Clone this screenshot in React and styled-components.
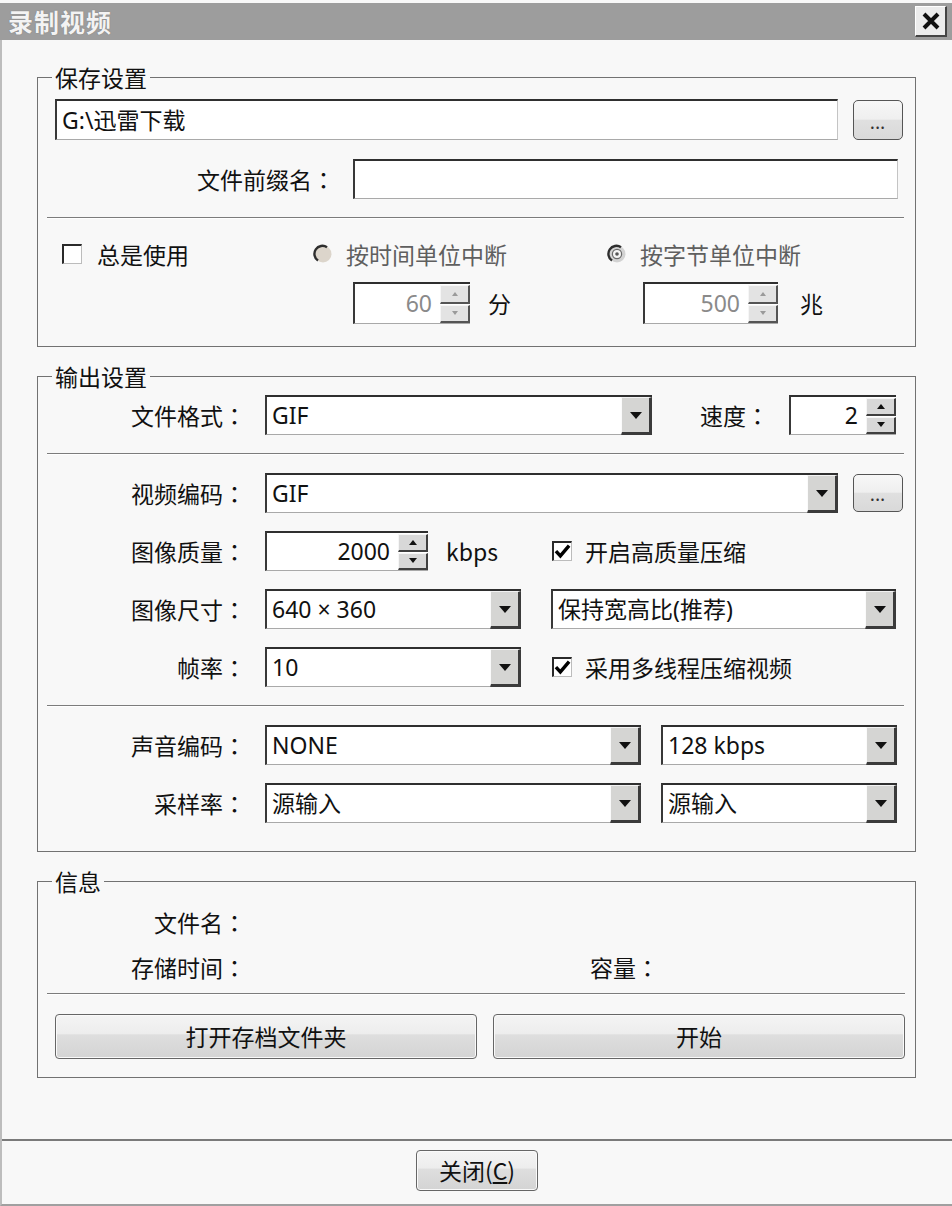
import React from 'react';
import styled, { createGlobalStyle } from 'styled-components';

const FONT = `"Noto Sans CJK SC", "Noto Sans", sans-serif`;
const FIELD_FONT = `"Noto Sans", "Noto Sans CJK SC", sans-serif`;

const GlobalStyle = createGlobalStyle`
  * { box-sizing: border-box; }
  html, body { margin: 0; padding: 0; background: #fff; }
  body { font-family: ${FONT}; color: #111; }
`;

const Window = styled.div`
  width: 952px;
  height: 1206px;
  display: flex;
  flex-direction: column;
  background: #f8f8f8;
  overflow: hidden;
`;

const TitleBar = styled.div`
  margin-top: 3px;
  height: 37px;
  flex: none;
  display: flex;
  align-items: center;
  justify-content: space-between;
  padding: 0 5px 0 8px;
  background: #9d9d9d;
`;

const Title = styled.div`
  font-size: 25px;
  font-weight: 700;
  line-height: 1;
  letter-spacing: 1px;
  color: #f3f3f3;
  text-shadow: 0 0 1px #6a6a6a;
`;

const CloseBox = styled.div`
  width: 32px;
  height: 31px;
  display: flex;
  align-items: center;
  justify-content: center;
  background: #ececec;
  border-top: 1px solid #fff;
  border-left: 1px solid #fff;
  border-right: 2px solid #444;
  border-bottom: 2px solid #444;
`;

const Body = styled.div`
  flex: 1;
  display: flex;
  flex-direction: column;
  border-left: 2px solid #bdbdbd;
  border-bottom: 2px solid #a0a0a0;
`;

const Main = styled.div`
  flex: 1;
  display: flex;
  flex-direction: column;
  gap: 16px;
  padding: 24px 36px 0 35px;
`;

const Footer = styled.div`
  flex: none;
  height: 65px;
  display: flex;
  justify-content: center;
  padding-top: 9px;
  border-top: 2px solid #7a7a7a;
`;

const Group = styled.fieldset`
  margin: 0;
  min-width: 0;
  border: 1px solid #727272;
  padding: ${(p) => p.$pad};
  display: flex;
  flex-direction: column;
  gap: ${(p) => p.$gap || 0}px;
`;

const Legend = styled.legend`
  padding: 0 3px;
  margin-left: -3px;
  font-size: 23px;
  line-height: 26px;
  color: #111;
`;

const Row = styled.div`
  flex: none;
  display: flex;
  align-items: center;
  height: ${(p) => p.$h || 40}px;
  margin-top: ${(p) => p.$mt || 0}px;
`;

const Separator = styled.div`
  flex: none;
  height: 2px;
  margin: ${(p) => p.$mt || 0}px 0 0 -8px;
  border-top: 1px solid #7c7c7c;
  border-bottom: 1px solid #fff;
`;

const Text = styled.span`
  flex: none;
  font-size: 23px;
  line-height: 1;
  white-space: nowrap;
  color: ${(p) => (p.$muted ? '#5f5f5f' : '#111')};
  margin-left: ${(p) => p.$ml || 0}px;
  width: ${(p) => (p.$w ? `${p.$w}px` : 'auto')};
  text-align: ${(p) => p.$align || 'left'};
`;

const Colon = styled.span`
  font-family: "Noto Sans CJK JP", sans-serif;
`;

const Label = ({ w, ml, children }) => (
  <Text $w={w} $ml={ml} $align="right">
    {children}
    <Colon>：</Colon>
  </Text>
);

const Field = styled.div`
  flex: none;
  display: flex;
  width: ${(p) => p.$w}px;
  height: ${(p) => p.$h || 40}px;
  margin-left: ${(p) => p.$ml || 0}px;
  background: #fff;
  border-top: 2px solid #2f2f2f;
  border-left: 2px solid #383838;
  border-right: ${(p) => (p.$flush ? 'none' : '1px solid #c4c4c4')};
  border-bottom: 1px solid #a9a9a9;
`;

const FieldText = styled.div`
  flex: 1;
  display: flex;
  align-items: center;
  justify-content: ${(p) => (p.$right ? 'flex-end' : 'flex-start')};
  padding: ${(p) => (p.$right ? '0 8px 0 0' : '0 0 0 5px')};
  font-family: ${FIELD_FONT};
  font-size: 23px;
  line-height: 1;
  white-space: nowrap;
  color: ${(p) => (p.$muted ? '#8a8a8a' : '#111')};
`;

const ArrowButton = styled.div`
  flex: none;
  width: 31px;
  display: flex;
  align-items: center;
  justify-content: center;
  background: #d5d5d3;
  border-top: 1px solid #f2f2f2;
  border-left: 1px solid #fbfbfb;
  border-right: 3px solid #3b3b3b;
  border-bottom: 3px solid #3b3b3b;
  margin-bottom: -1px;
`;

const Triangle = styled.div`
  width: 0;
  height: 0;
  border-left: ${(p) => p.$size || 6.5}px solid transparent;
  border-right: ${(p) => p.$size || 6.5}px solid transparent;
  ${(p) => (p.$up ? 'border-bottom' : 'border-top')}: ${(p) => (p.$size || 6.5) + 1}px solid ${(p) => p.$color || '#111'};
`;

const SpinColumn = styled.div`
  flex: none;
  width: 30px;
  display: flex;
  flex-direction: column;
  gap: 1px;
  padding-top: 1px;
`;

const SpinButton = styled.div`
  flex: 1;
  display: flex;
  align-items: center;
  justify-content: center;
  background: ${(p) => (p.$disabled ? '#e3e3e3' : '#d8d8d8')};
  border-top: 1px solid #f6f6f6;
  border-left: 1px solid #f6f6f6;
  border-right: 2px solid ${(p) => (p.$disabled ? '#555' : '#3f3f3f')};
  border-bottom: 2px solid ${(p) => (p.$disabled ? '#555' : '#3f3f3f')};
`;

const DotsButton = styled.div`
  flex: none;
  width: 50px;
  height: ${(p) => p.$h || 40}px;
  margin-left: 15px;
  display: flex;
  align-items: flex-end;
  justify-content: center;
  padding-bottom: 9px;
  border: 1px solid #555;
  border-radius: 5px;
  background: linear-gradient(#f7f7f7 0%, #efefef 48%, #e0e0e0 50%, #d9d9d9 100%);
  font-size: 13px;
  font-weight: 700;
  letter-spacing: 1px;
  line-height: 1;
  color: #333;
`;

const PushButton = styled.div`
  flex: none;
  width: ${(p) => p.$w}px;
  height: ${(p) => p.$h || 45}px;
  margin-left: ${(p) => p.$ml || 0}px;
  display: flex;
  align-items: center;
  justify-content: center;
  border: 1px solid #666;
  border-radius: 4px;
  box-shadow: inset 0 0 0 1px #fafafa;
  background: linear-gradient(#f4f4f4 0%, #ededed 44%, #dedede 46%, #d4d4d4 100%);
  font-size: 23px;
  line-height: 1;
  color: #111;
`;

const CheckBox = styled.div`
  flex: none;
  width: 20px;
  height: 20px;
  margin-left: ${(p) => p.$ml || 0}px;
  display: flex;
  align-items: center;
  justify-content: center;
  background: #fff;
  border-top: 2px solid #2a2a2a;
  border-left: 2px solid #2a2a2a;
  border-right: 1px solid #bcbcbc;
  border-bottom: 1px solid #bcbcbc;
`;

const OptionGrid = styled.div`
  flex: none;
  margin-top: 18px;
  display: grid;
  grid-template-columns: 258px 294px 1fr;
  grid-template-rows: 34px 42px;
  row-gap: 11px;
`;

const Cell = styled.div`
  display: flex;
  align-items: center;
  padding-left: ${(p) => p.$pl || 0}px;
`;

const CheckMark = () => (
  <svg width="17" height="17" viewBox="0 0 16 16">
    <path d="M1.8 7.6 L6 12.2 L14.2 2.4" fill="none" stroke="#000" strokeWidth="3.2" />
  </svg>
);

const RadioOff = () => (
  <svg width="20" height="20" viewBox="0 0 20 20" style={{ flex: 'none' }}>
    <circle cx="10" cy="10" r="8.5" fill="#dcd5cb" />
    <path d="M14 3.2 A8 8 0 1 0 5 16.6" fill="none" stroke="#2e2e2e" strokeWidth="2.4" />
  </svg>
);

const RadioOn = () => (
  <svg width="20" height="20" viewBox="0 0 20 20" style={{ flex: 'none' }}>
    <circle cx="10" cy="10" r="8.5" fill="#d2d2d2" />
    <path d="M14 3.2 A8 8 0 1 0 5 16.6" fill="none" stroke="#2e2e2e" strokeWidth="2.4" />
    <circle cx="10" cy="10" r="4.6" fill="#f4f4f4" stroke="#6a6a6a" strokeWidth="1.2" />
    <circle cx="10" cy="10" r="1.8" fill="#555" />
  </svg>
);

const Select = ({ w, ml, value }) => (
  <Field $w={w} $ml={ml} $flush>
    <FieldText>{value}</FieldText>
    <ArrowButton>
      <Triangle />
    </ArrowButton>
  </Field>
);

const Spinner = ({ w, ml, h, value, disabled }) => (
  <Field $w={w} $ml={ml} $h={h} $flush>
    <FieldText $right $muted={disabled}>{value}</FieldText>
    <SpinColumn>
      <SpinButton $disabled={disabled}>
        <Triangle $up $size={disabled ? 3 : 4} $color={disabled ? '#9a9a9a' : '#111'} />
      </SpinButton>
      <SpinButton $disabled={disabled}>
        <Triangle $size={disabled ? 3 : 4} $color={disabled ? '#9a9a9a' : '#111'} />
      </SpinButton>
    </SpinColumn>
  </Field>
);

const Check = ({ ml, checked, children }) => (
  <>
    <CheckBox $ml={ml}>{checked && <CheckMark />}</CheckBox>
    <Text $ml={13}>{children}</Text>
  </>
);

export default function App() {
  return (
    <>
      <GlobalStyle />
      <Window>
        <TitleBar>
          <Title>录制视频</Title>
          <CloseBox>
            <svg width="20" height="20" viewBox="0 0 20 20">
              <path d="M3 3 L17 17 M17 3 L3 17" stroke="#111" strokeWidth="4" />
            </svg>
          </CloseBox>
        </TitleBar>

        <Body>
          <Main>
            <Group $pad="9px 11px 22px 17px">
              <Legend>保存设置</Legend>
              <Row $h={41}>
                <Field $w={783} $h={41}>
                  <FieldText>G:\迅雷下载</FieldText>
                </Field>
                <DotsButton>...</DotsButton>
              </Row>
              <Row $mt={19}>
                <Label w={280}>文件前缀名</Label>
                <Field $w={545} $ml={18} />
              </Row>
              <Separator $mt={18} />
              <OptionGrid>
                <Cell $pl={7}>
                  <CheckBox />
                  <Text $ml={15}>总是使用</Text>
                </Cell>
                <Cell>
                  <RadioOff />
                  <Text $ml={13} $muted>按时间单位中断</Text>
                </Cell>
                <Cell>
                  <RadioOn />
                  <Text $ml={13} $muted>按字节单位中断</Text>
                </Cell>
                <Cell />
                <Cell $pl={40}>
                  <Spinner w={117} h={42} value="60" disabled />
                  <Text $ml={18}>分</Text>
                </Cell>
                <Cell $pl={36}>
                  <Spinner w={135} h={42} value="500" disabled />
                  <Text $ml={22}>兆</Text>
                </Cell>
              </OptionGrid>
            </Group>

            <Group $pad="6px 11px 28px 17px" $gap={18}>
              <Legend>输出设置</Legend>
              <Row>
                <Label w={191}>文件格式</Label>
                <Select w={387} ml={19} value="GIF" />
                <Label ml={48}>速度</Label>
                <Spinner w={107} ml={20} value="2" />
              </Row>
              <Separator />
              <Row>
                <Label w={191}>视频编码</Label>
                <Select w={573} ml={19} value="GIF" />
                <DotsButton $h={38}>...</DotsButton>
              </Row>
              <Row>
                <Label w={191}>图像质量</Label>
                <Spinner w={163} ml={19} value="2000" />
                <Text $ml={18} $w={106}>kbps</Text>
                <Check checked>开启高质量压缩</Check>
              </Row>
              <Row>
                <Label w={191}>图像尺寸</Label>
                <Select w={256} ml={19} value="640 × 360" />
                <Select w={345} ml={30} value="保持宽高比(推荐)" />
              </Row>
              <Row>
                <Label w={191}>帧率</Label>
                <Select w={256} ml={19} value="10" />
                <Check ml={31} checked>采用多线程压缩视频</Check>
              </Row>
              <Separator />
              <Row>
                <Label w={191}>声音编码</Label>
                <Select w={376} ml={19} value="NONE" />
                <Select w={236} ml={20} value="128 kbps" />
              </Row>
              <Row>
                <Label w={191}>采样率</Label>
                <Select w={376} ml={19} value="源输入" />
                <Select w={236} ml={20} value="源输入" />
              </Row>
            </Group>

            <Group $pad="13px 10px 18px 17px">
              <Legend>信息</Legend>
              <Row $h={30}>
                <Label w={191}>文件名</Label>
              </Row>
              <Row $h={30} $mt={15}>
                <Label w={191}>存储时间</Label>
                <Label ml={344}>容量</Label>
              </Row>
              <Separator $mt={11} />
              <Row $h={45} $mt={19}>
                <PushButton $w={422}>打开存档文件夹</PushButton>
                <PushButton $w={412} $ml={16}>开始</PushButton>
              </Row>
            </Group>
          </Main>

          <Footer>
            <PushButton $w={122} $h={41}>
              关闭(<u>C</u>)
            </PushButton>
          </Footer>
        </Body>
      </Window>
    </>
  );
}
